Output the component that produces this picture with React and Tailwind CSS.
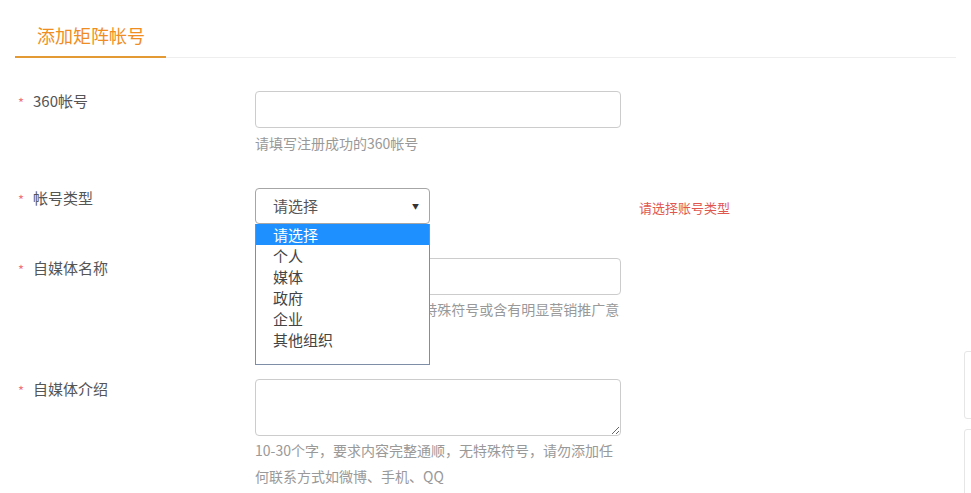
const fontStack = { fontFamily: '"Microsoft YaHei", "Noto Sans CJK SC", "Noto Sans", sans-serif' };

const Label = ({ children }) => (
  <div className="w-[240px] shrink-0 flex items-center h-[20px] text-[15px] text-[#555]">
    <span className="w-[18px] pl-[3px] text-[#f0757a] text-[13px] leading-none pt-[2px]">*</span>
    {children}
  </div>
);

const options = ['请选择', '个人', '媒体', '政府', '企业', '其他组织'];

export default function App() {
  return (
    <div className="relative w-[971px] h-[493px] overflow-hidden bg-white" style={fontStack}>
      <div className="px-[15px]">
        {/* tab header */}
        <div className="flex border-b border-[#eeeeee] h-[58px]">
          <div className="w-[151px] border-b-2 border-[#e39a35] pl-[22px] pt-[23px] text-[18px] leading-[24px] text-[#ef8d23] -mb-px">
            添加矩阵帐号
          </div>
        </div>

        <div className="pt-[33px]">
          {/* 360 account */}
          <div className="flex mb-[32px]">
            <Label>360帐号</Label>
            <div className="w-[366px]">
              <input className="block w-full h-[37px] border border-[#cccccc] rounded-[4px] outline-none" />
              <p className="mt-[2px] text-[14px] leading-[26px] text-[#999]">请填写注册成功的360帐号</p>
            </div>
          </div>

          {/* account type */}
          <div className="flex mb-[34px] relative z-10">
            <Label>帐号类型</Label>
            <div className="w-[366px] relative">
              <div className="w-[175px] h-[36px] border border-[#a6a6a6] rounded-[4px] flex items-center justify-between pl-[17px] pr-[10px] text-[15px] text-[#555]">
                <span>请选择</span>
                <span className="text-[7px] text-[#333]">▼</span>
              </div>
              <div className="absolute left-0 top-[36px] w-[175px] h-[141px] bg-white border border-[#7d8ea6] border-t-0 text-[15px] text-[#444]">
                {options.map((o, i) => (
                  <div
                    key={o}
                    className={`h-[21px] leading-[21px] pl-[17px] ${i === 0 ? 'bg-[#1e90ff] text-white' : ''}`}
                  >
                    {o}
                  </div>
                ))}
              </div>
            </div>
            <div className="ml-[18px] pt-[11px] text-[13px] leading-[18px] text-[#e0574f]">请选择账号类型</div>
          </div>

          {/* media name */}
          <div className="flex mb-[32px]">
            <Label>自媒体名称</Label>
            <div className="w-[366px]">
              <input className="block w-full h-[37px] border border-[#cccccc] rounded-[4px] outline-none" />
              <p className="mt-[1px] text-[14px] leading-[26px] text-[#999] whitespace-nowrap">
                2-10个字，名称简洁通顺无特殊符号或含有明显营销推广意
                <br />
                义的词语
              </p>
            </div>
          </div>

          {/* media intro */}
          <div className="flex -mt-px">
            <Label>自媒体介绍</Label>
            <div className="w-[366px]">
              <textarea className="block w-full h-[57px] border border-[#cccccc] rounded-[4px] outline-none" />
              <p className="mt-px text-[14px] leading-[26px] text-[#999]">
                10-30个字，要求内容完整通顺，无特殊符号，请勿添加任何联系方式如微博、手机、QQ
              </p>
            </div>
          </div>
        </div>
      </div>

      {/* faint floating panel at right edge */}
      <div className="absolute left-[964px] top-[351px] w-[20px] h-[68px] border border-[#e6e6e6] rounded-[3px]" />
      <div className="absolute left-[964px] top-[429px] w-[20px] h-[80px] border border-[#e6e6e6] rounded-[3px]" />
    </div>
  );
}
